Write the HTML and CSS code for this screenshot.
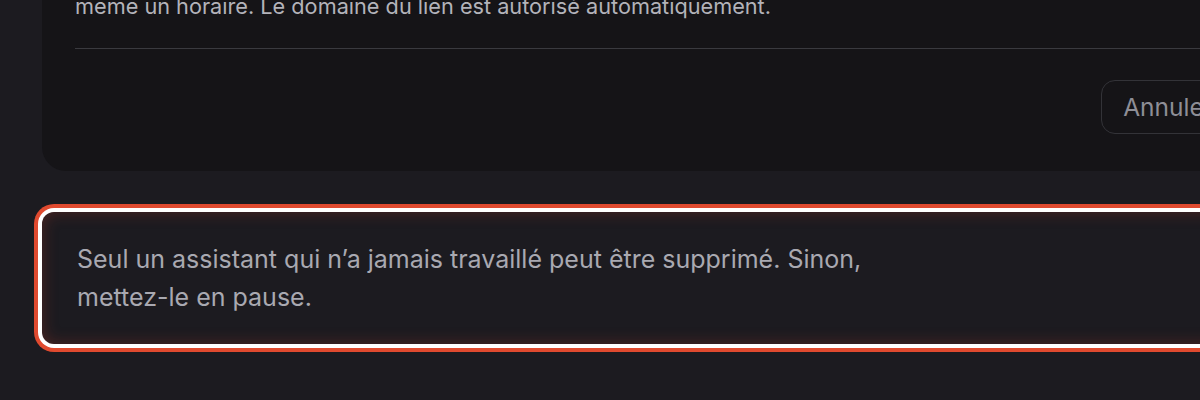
FILE: index.html
```html
<!DOCTYPE html>
<html lang="fr">
<head>
    <meta charset="UTF-8">
    <meta name="viewport" content="width=device-width, initial-scale=1.0">
    <title>Assistant - Paramètres</title>
    <link rel="stylesheet" href="styles.css">
</head>
<body>
<div class="page">
    <div class="card">
        <p class="card-text">même un horaire. Le domaine du lien est autorisé automatiquement.</p>
        <div class="divider"></div>
        <div class="card-footer">
            <button type="button" class="btn-outline">Annuler</button>
        </div>
    </div>

    <div class="notice" tabindex="0">
        <p class="notice-text">Seul un assistant qui n’a jamais travaillé peut être supprimé. Sinon, mettez-le en pause.</p>
    </div>
</div>
</body>
</html>
```

FILE: styles.css
```css
* {
    margin: 0;
    padding: 0;
    box-sizing: border-box;
}

html, body {
    height: 100%;
    overflow: hidden;
}

body {
    font-family: Inter, "Noto Sans", sans-serif;
    background: #1c1b20;
    color: #a9a9b1;
}

.page {
    margin-top: -9px;
    padding-left: 42px;
}

.card {
    width: 1226px;
    background: #151417;
    border-radius: 0 0 24px 24px;
    padding: 0 33px 37px;
}

.card-text {
    font-size: 21.7px;
    line-height: 30px;
    color: #b3b3ba;
}

.divider {
    height: 1px;
    background: #3a3a3f;
    margin-top: 27px;
}

.card-footer {
    display: flex;
    justify-content: flex-end;
    margin-top: 31px;
}

.btn-outline {
    height: 54px;
    padding: 0 21px;
    background: transparent;
    border: 1px solid #333338;
    border-radius: 14px;
    font-family: inherit;
    font-size: 24.5px;
    color: #8e8e96;
    cursor: pointer;
}

.notice {
    width: 1240px;
    margin-top: 41px;
    padding: 28px 35px;
    background: #1c1b20;
    border-radius: 12px;
    box-shadow:
        inset 0 0 16px rgba(190, 60, 40, 0.32),
        0 0 0 4px #ffffff,
        0 0 0 8px #e04a2f;
    outline: none;
}

.notice-text {
    max-width: 860px;
    font-size: 25px;
    line-height: 38px;
    color: #a9a9b1;
}
```
